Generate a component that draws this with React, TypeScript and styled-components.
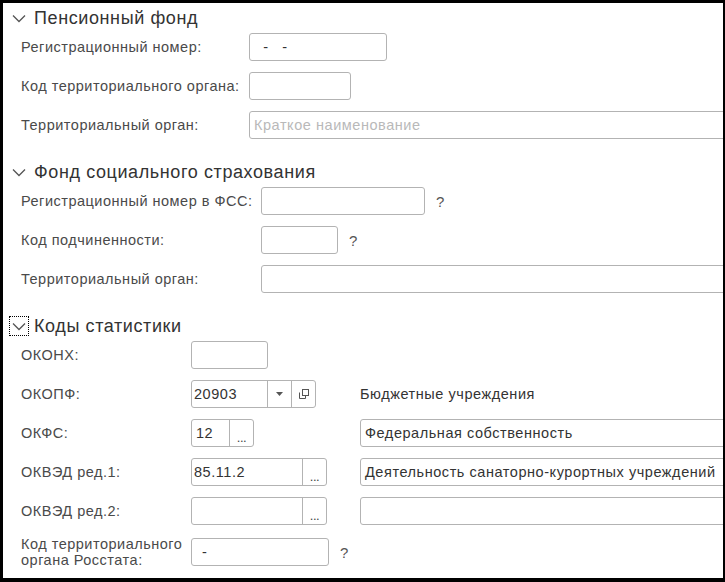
import React from 'react'
import styled, { createGlobalStyle } from 'styled-components'

const LookAndFeel = createGlobalStyle`
  html, body {
    margin: 0;
    padding: 0;
    background: #ffffff;
  }
  * {
    box-sizing: border-box;
  }
`

const Frame = styled.div`
  width: 725px;
  height: 582px;
  border-style: solid;
  border-color: #000;
  border-width: 3px 2px 4px 3px;
  background: #fff;
  overflow: hidden;
  font-family: "Liberation Sans", Arial, sans-serif;
  color: #4a4a4a;
`

const Section = styled.section`
  display: flex;
  flex-direction: column;
  gap: 11px;
  margin-bottom: 18px;
`

const SectionHeader = styled.div`
  display: flex;
  align-items: center;
  height: 30px;
  margin-bottom: -11px;
  padding-left: 6px;
`

const Toggle = styled.div<{ $focused?: boolean }>`
  width: 20px;
  height: 20px;
  display: flex;
  align-items: center;
  justify-content: center;
  border: 1px dotted ${p => (p.$focused ? '#000' : 'transparent')};
  margin-right: 5px;
`

const SectionTitle = styled.div`
  font-size: 18px;
  letter-spacing: 0.6px;
  color: #333;
`

const Row = styled.div<{ $labelWidth: number }>`
  display: grid;
  grid-template-columns: ${p => p.$labelWidth}px 1fr;
  align-items: center;
  padding-left: 18px;
  min-height: 28px;
`

const StatRow = styled.div`
  display: grid;
  grid-template-columns: 170px 169px 1fr;
  align-items: center;
  padding-left: 18px;
  min-height: 28px;
`

const Label = styled.div`
  font-size: 14.5px;
  letter-spacing: 0.5px;
  line-height: 16px;
  white-space: nowrap;
`

const Field = styled.div`
  display: flex;
  align-items: center;
  gap: 11px;
  min-width: 0;
`

const Box = styled.div<{ $width?: number; $stretch?: boolean }>`
  display: flex;
  height: 28px;
  border: 1px solid #b3b3b3;
  border-radius: 3px;
  background: #fff;
  width: ${p => (p.$stretch ? 'auto' : `${p.$width}px`)};
  flex: ${p => (p.$stretch ? '1' : 'none')};
  margin-right: ${p => (p.$stretch ? '-10px' : '0')};
  overflow: hidden;
`

const Value = styled.div<{ $placeholder?: boolean; $pad?: number }>`
  flex: 1;
  display: flex;
  align-items: center;
  padding-left: ${p => p.$pad ?? 4}px;
  font-size: 14.5px;
  letter-spacing: 0.55px;
  color: ${p => (p.$placeholder ? '#b9b9b9' : '#333')};
  white-space: pre;
  overflow: hidden;
`

const Button = styled.div`
  width: 24px;
  flex: none;
  border-left: 1px solid #b3b3b3;
  display: flex;
  align-items: center;
  justify-content: center;
  color: #444;
`

const Dots = styled.span`
  font-size: 13px;
  line-height: 1;
  margin-top: 8px;
  letter-spacing: -0.5px;
`

const Hint = styled.span`
  font-size: 15px;
  color: #555;
`

const Description = styled.div`
  font-size: 14.5px;
  letter-spacing: 0.55px;
  color: #333;
`

const Chevron = () => (
  <svg width="14" height="9" viewBox="0 0 14 9">
    <path d="M1 1.5 L7 7.5 L13 1.5" fill="none" stroke="#555" strokeWidth="1.3" />
  </svg>
)

const DropArrow = () => (
  <svg width="7" height="4" viewBox="0 0 7 4">
    <path d="M0 0 H7 L3.5 4 Z" fill="#555" />
  </svg>
)

const OpenIcon = () => (
  <svg width="12" height="12" viewBox="0 0 12 12">
    <rect x="4.5" y="1.5" width="6" height="6" fill="none" stroke="#555" strokeWidth="1" />
    <path d="M1.5 4.5 V10.5 H7.5 V8" fill="none" stroke="#555" strokeWidth="1" />
  </svg>
)

const Header = ({ title, focused }: { title: string; focused?: boolean }) => (
  <SectionHeader>
    <Toggle $focused={focused}>
      <Chevron />
    </Toggle>
    <SectionTitle>{title}</SectionTitle>
  </SectionHeader>
)

const Ellipsis = () => (
  <Button>
    <Dots>...</Dots>
  </Button>
)

const App = () => {
  return (
    <Frame>
      <LookAndFeel />

      <Section>
        <Header title="Пенсионный фонд" />
        <Row $labelWidth={228}>
          <Label>Регистрационный номер:</Label>
          <Field>
            <Box $width={138}>
              <Value $pad={4}>{'  -   -'}</Value>
            </Box>
          </Field>
        </Row>
        <Row $labelWidth={228}>
          <Label>Код территориального органа:</Label>
          <Field>
            <Box $width={102}>
              <Value />
            </Box>
          </Field>
        </Row>
        <Row $labelWidth={228}>
          <Label>Территориальный орган:</Label>
          <Field>
            <Box $stretch>
              <Value $placeholder>Краткое наименование</Value>
            </Box>
          </Field>
        </Row>
      </Section>

      <Section>
        <Header title="Фонд социального страхования" />
        <Row $labelWidth={240}>
          <Label>Регистрационный номер в ФСС:</Label>
          <Field>
            <Box $width={164}>
              <Value />
            </Box>
            <Hint>?</Hint>
          </Field>
        </Row>
        <Row $labelWidth={240}>
          <Label>Код подчиненности:</Label>
          <Field>
            <Box $width={77}>
              <Value />
            </Box>
            <Hint>?</Hint>
          </Field>
        </Row>
        <Row $labelWidth={240}>
          <Label>Территориальный орган:</Label>
          <Field>
            <Box $stretch>
              <Value />
            </Box>
          </Field>
        </Row>
      </Section>

      <Section>
        <Header title="Коды статистики" focused />
        <StatRow>
          <Label>ОКОНХ:</Label>
          <Field>
            <Box $width={77}>
              <Value />
            </Box>
          </Field>
          <div />
        </StatRow>
        <StatRow>
          <Label>ОКОПФ:</Label>
          <Field>
            <Box $width={125}>
              <Value $pad={2}>20903</Value>
              <Button>
                <DropArrow />
              </Button>
              <Button>
                <OpenIcon />
              </Button>
            </Box>
          </Field>
          <Description>Бюджетные учреждения</Description>
        </StatRow>
        <StatRow>
          <Label>ОКФС:</Label>
          <Field>
            <Box $width={63}>
              <Value $pad={4}>12</Value>
              <Ellipsis />
            </Box>
          </Field>
          <Field>
            <Box $stretch>
              <Value>Федеральная собственность</Value>
            </Box>
          </Field>
        </StatRow>
        <StatRow>
          <Label>ОКВЭД ред.1:</Label>
          <Field>
            <Box $width={136}>
              <Value $pad={2}>85.11.2</Value>
              <Ellipsis />
            </Box>
          </Field>
          <Field>
            <Box $stretch>
              <Value>Деятельность санаторно-курортных учреждений</Value>
            </Box>
          </Field>
        </StatRow>
        <StatRow>
          <Label>ОКВЭД ред.2:</Label>
          <Field>
            <Box $width={136}>
              <Value />
              <Ellipsis />
            </Box>
          </Field>
          <Field>
            <Box $stretch>
              <Value />
            </Box>
          </Field>
        </StatRow>
        <StatRow>
          <Label>
            Код территориального
            <br />
            органа Росстата:
          </Label>
          <Field>
            <Box $width={138}>
              <Value $pad={10}>-</Value>
            </Box>
            <Hint>?</Hint>
          </Field>
          <div />
        </StatRow>
      </Section>
    </Frame>
  )
}

export default App
